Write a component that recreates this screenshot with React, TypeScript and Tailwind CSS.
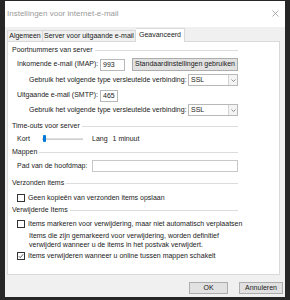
import React from "react";

const font = { fontFamily: '"Liberation Sans", Arial, sans-serif' };

const GroupHeader: React.FC<{ label: string; className?: string }> = ({ label, className }) => (
  <div className={`flex items-center h-[10px] ${className ?? ""}`}>
    <span className="pr-[2px] whitespace-nowrap">{label}</span>
    <div className="flex-1 h-px bg-[#dcdcdc]" />
  </div>
);

const Combo: React.FC<{ value: string }> = ({ value }) => (
  <div className="ml-auto w-[50px] h-[12px] flex border border-[#b8b8b8] bg-white">
    <span className="flex-1 pl-[2px] leading-[10px]">{value}</span>
    <div className="w-[9px] flex items-center justify-center bg-[#f4f4f4] border-l border-[#d4d4d4]">
      <svg width="5" height="3" viewBox="0 0 5 3">
        <path d="M0.5 0.5 L2.5 2.5 L4.5 0.5" fill="none" stroke="#777" strokeWidth="0.8" />
      </svg>
    </div>
  </div>
);

const CheckBox: React.FC<{ checked?: boolean }> = ({ checked }) => (
  <div className="w-[8px] h-[8px] border border-[#333] bg-white flex items-center justify-center shrink-0">
    {checked && (
      <svg width="6" height="6" viewBox="0 0 6 6">
        <path d="M0.8 3.2 L2.3 4.7 L5.2 1.2" fill="none" stroke="#333" strokeWidth="0.8" />
      </svg>
    )}
  </div>
);

export default function App() {
  return (
    <div className="w-[290px] h-[300px] bg-[#262626] pt-px px-[5px] text-[7px] text-[#1a1a1a]" style={font}>
      <div className="w-[280px] h-[296px] bg-[#f0f0f0] flex flex-col">
        {/* title bar */}
        <div className="h-[26px] bg-white flex items-start pt-[8px] pl-[2px] pr-[6px]">
          <span className="text-[8px] text-[#9a9a9a] leading-[9px]">Instellingen voor internet-e-mail</span>
          <svg className="ml-auto mt-px" width="7" height="7" viewBox="0 0 7 7">
            <path d="M0.5 0.5 L6.5 6.5 M6.5 0.5 L0.5 6.5" stroke="#9a9a9a" strokeWidth="0.8" />
          </svg>
        </div>

        <div className="flex flex-col pl-[2px] pr-[5px] pt-px">
          {/* tabs */}
          <div className="flex items-end h-[13px] relative z-10">
            <div className="w-[36px] h-[11px] border border-b-0 border-[#d9d9d9] bg-[#f0f0f0] flex items-center justify-center">
              Algemeen
            </div>
            <div className="w-[93px] h-[11px] border border-b-0 border-l-0 border-[#d9d9d9] bg-[#f0f0f0] flex items-center justify-center">
              Server voor uitgaande e-mail
            </div>
            <div className="w-[49px] h-[14px] -mb-px border border-b-0 border-l-0 border-[#d9d9d9] bg-white flex items-center justify-center">
              Geavanceerd
            </div>
          </div>

          {/* panel */}
          <div className="h-[234px] bg-white border border-[#d9d9d9] pt-[3px] pl-[4px]">
            <div className="w-[226px] flex flex-col">
              <GroupHeader label="Poortnummers van server" />

              <div className="flex items-center h-[13px] mt-[3px] pl-[5px]">
                <span className="w-[83px]">Inkomende e-mail (IMAP):</span>
                <div className="w-[25px] h-[12px] border border-[#b8b8b8] bg-white pl-[2px] leading-[10px]">993</div>
                <div className="ml-[7px] flex-1 h-[13px] bg-[#e1e1e1] border border-[#adadad] flex items-center justify-center">
                  Standaardinstellingen gebruiken
                </div>
              </div>

              <div className="flex items-center h-[14px] mt-[2px] pl-[17px]">
                <span>Gebruik het volgende type versleutelde verbinding:</span>
                <Combo value="SSL" />
              </div>

              <div className="flex items-center h-[13px] mt-[2px] pl-[5px]">
                <span className="w-[83px]">Uitgaande e-mail (SMTP):</span>
                <div className="w-[18px] h-[12px] border border-[#b8b8b8] bg-white pl-[2px] leading-[10px]">465</div>
              </div>

              <div className="flex items-center h-[14px] mt-px pl-[17px]">
                <span>Gebruik het volgende type versleutelde verbinding:</span>
                <Combo value="SSL" />
              </div>

              <GroupHeader label="Time-outs voor server" className="mt-[4px]" />

              <div className="flex items-center h-[10px] mt-[3px] pl-[5px]">
                <span className="w-[25px]">Kort</span>
                <div className="relative w-[41px] h-[2px] bg-[#e0e0e0] border-b border-[#cfcfcf]">
                  <div className="absolute left-[1px] -top-[3px] w-[3px] h-[7px] bg-[#0078d7] rounded-[1px]" />
                </div>
                <span className="ml-[9px]">Lang</span>
                <span className="ml-[5px]">1 minuut</span>
              </div>

              <GroupHeader label="Mappen" className="mt-[3px]" />

              <div className="flex items-center h-[14px] mt-[2px] pl-[5px]">
                <span className="w-[75px]">Pad van de hoofdmap:</span>
                <div className="flex-1 h-[12px] border border-[#c8c8c8] bg-white" />
              </div>

              <GroupHeader label="Verzonden items" className="mt-[5px]" />

              <div className="flex items-center h-[10px] mt-[5px] pl-[5px] gap-[3px]">
                <CheckBox />
                <span className="whitespace-nowrap">Geen kopieën van verzonden items opslaan</span>
              </div>

              <GroupHeader label="Verwijderde Items" className="mt-[2px]" />

              <div className="flex items-center h-[10px] mt-[4px] pl-[5px] gap-[3px]">
                <CheckBox />
                <span className="whitespace-nowrap">Items markeren voor verwijdering, maar niet automatisch verplaatsen</span>
              </div>

              <div className="mt-[2px] pl-[17px] leading-[9px] whitespace-nowrap">
                <div>Items die zijn gemarkeerd voor verwijdering, worden definitief</div>
                <div>verwijderd wanneer u de items in het postvak verwijdert.</div>
              </div>

              <div className="flex items-center h-[10px] mt-[2px] pl-[5px] gap-[3px]">
                <CheckBox checked />
                <span className="whitespace-nowrap">Items verwijderen wanneer u online tussen mappen schakelt</span>
              </div>
            </div>
          </div>

          {/* footer buttons */}
          <div className="flex justify-end mt-[7px] pr-0 gap-[11px] -mr-[3px]">
            <div className="w-[39px] h-[12px] bg-[#e1e1e1] border border-[#adadad] flex items-center justify-center">OK</div>
            <div className="w-[44px] h-[12px] bg-[#e1e1e1] border border-[#adadad] flex items-center justify-center">Annuleren</div>
          </div>
        </div>
      </div>
    </div>
  );
}
